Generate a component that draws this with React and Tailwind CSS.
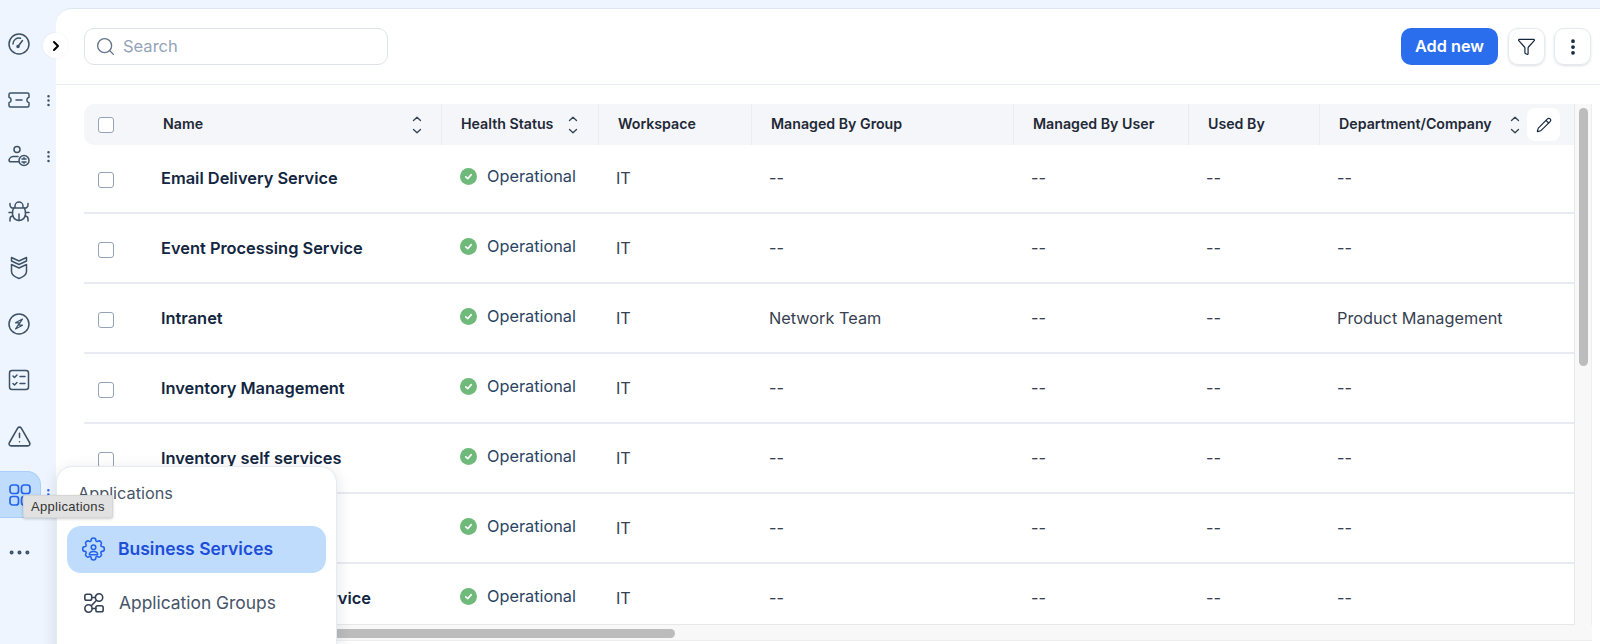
import {
  ChevronRight,
  EllipsisVertical,
  Ellipsis,
  Funnel,
  Pencil,
  Search,
  TriangleAlert,
} from "lucide-react";

const inter = "font-['Inter',sans-serif]";

function Ico({ children, className = "w-[24px] h-[24px]", sw = 1.5 }) {
  return (
    <svg viewBox="0 0 24 24" fill="none" stroke="currentColor" strokeWidth={sw} strokeLinecap="round" strokeLinejoin="round" className={className}>
      {children}
    </svg>
  );
}

const GaugeIcon = () => (
  <Ico>
    <circle cx="12" cy="12" r="10" />
    <path d="M6 12a6 6 0 0 1 7.5-5.800" />
    <path d="M11 14.500l4.500-6" />
    <circle cx="11" cy="14.500" r="1" fill="currentColor" />
  </Ico>
);
const TicketIcon = () => (
  <Ico>
    <path d="M3.500 5h17a1.500 1.500 0 0 1 1.500 1.500v2.700a2.900 2.900 0 0 0 0 5.600v2.700a1.500 1.500 0 0 1-1.500 1.500h-17A1.500 1.500 0 0 1 2 17.500v-2.700a2.900 2.900 0 0 0 0-5.600V6.500A1.500 1.500 0 0 1 3.500 5z" />
    <path d="M9 12h6" />
  </Ico>
);
const UserCostIcon = () => (
  <Ico>
    <circle cx="10" cy="5.500" r="3" />
    <path d="M11 12.500H7a4.500 4.500 0 0 0-5 3.500c0 1.200 1 1.800 2 1.800h8" />
    <circle cx="17" cy="16.500" r="5" />
    <path d="M15 15h4M15 18h4M17 13.800v.6M17 18.600v.6" />
  </Ico>
);
const BugIcon = () => (
  <Ico>
    <path d="M8 7.500V6a4 4 0 0 1 8 0v1.500" />
    <path d="M6.500 8h11c.8 2 1 4 1 6a6.500 6.500 0 0 1-13 0c0-2 .2-4 1-6z" />
    <path d="M12 14v6.500" />
    <path d="M3 3.500v1.500a3 3 0 0 0 3.500 3M21 3.500v1.500a3 3 0 0 1-3.500 3" />
    <path d="M2 12.500h3.500M22 12.500h-3.500" />
    <path d="M3 21v-2a3 3 0 0 1 3-3M21 21v-2a3 3 0 0 0-3-3" />
  </Ico>
);
const ShieldIcon = () => (
  <Ico>
    <path d="M4.500 1.500 12 5l7.500-3.500V5L12 8.500 4.500 5z" />
    <path d="M4.500 8.500 12 12l7.500-3.500v7c0 3-3.500 5.500-7.500 7-4-1.500-7.500-4-7.500-7z" />
  </Ico>
);
const BoltIcon = () => (
  <Ico>
    <circle cx="12" cy="12" r="10" />
    <path d="M15.500 7 8.500 10.800h4L8.500 17l7-3.800h-4z" strokeWidth="1.200" />
  </Ico>
);
const ChecklistIcon = () => (
  <Ico>
    <rect x="2.500" y="2.500" width="19" height="19" rx="2.500" />
    <path d="M6 8l1.500 1.500L10 7M6 15.500 7.500 17 10 14.500" />
    <path d="M13 8.500h5M13 15.500h5" />
  </Ico>
);
const GridIcon = () => (
  <Ico className="w-[24px] h-[24px]" sw={1.7}>
    <rect x="2" y="2" width="8.500" height="8.500" rx="2.500" />
    <rect x="13.500" y="2" width="8.500" height="8.500" rx="2.500" />
    <rect x="2" y="13.500" width="8.500" height="8.500" rx="2.500" />
    <rect x="13.500" y="13.500" width="8.500" height="8.500" rx="2.500" />
  </Ico>
);
const GearUserIcon = () => (
  <Ico className="w-[25px] h-[25px]">
    <path d="M9.700 2.800a2.300 2.300 0 0 1 4.600 0c0 .8 1 1.300 1.700.9a2.300 2.300 0 0 1 3.200 3.200c-.4.700 0 1.700.9 1.800a2.300 2.300 0 0 1 0 4.600c-.9.100-1.300 1.100-.9 1.800a2.300 2.300 0 0 1-3.200 3.200c-.7-.4-1.700 0-1.700.9a2.300 2.300 0 0 1-4.600 0c0-.9-1-1.300-1.700-.9a2.300 2.300 0 0 1-3.200-3.200c.4-.7 0-1.700-.9-1.800a2.300 2.300 0 0 1 0-4.600c.9-.1 1.300-1.100.9-1.800A2.300 2.300 0 0 1 8 3.700c.7.400 1.700-.1 1.700-.9z" transform="translate(0 .5)" />
    <circle cx="12" cy="9.800" r="2.200" />
    <path d="M8 17c0-2 1.800-3 4-3s4 1 4 3z" />
  </Ico>
);
const GroupsIcon = () => (
  <Ico className="w-[22px] h-[22px]" sw={1.7}>
    <rect x="2" y="2.500" width="7.500" height="6.500" rx="2" />
    <circle cx="17.500" cy="6" r="4" />
    <circle cx="6" cy="18" r="4" />
    <rect x="14" y="15" width="8" height="6.500" rx="2" />
    <path d="M9.500 6h4M14.800 9 9 15M10 18h4" />
  </Ico>
);

// up and down arrows with a wider gap than ChevronsUpDown
const SortArrows = () => (
  <svg viewBox="0 0 10 18" fill="none" stroke="currentColor" strokeWidth="1.300" strokeLinecap="round" strokeLinejoin="round" className="w-[10px] h-[18px] text-[#334155]">
    <path d="M1.500 4.500 5 1.200l3.500 3.300" />
    <path d="M1.500 13.500 5 16.800l3.500-3.300" />
  </svg>
);

const OkIcon = () => (
  <span className="w-[17px] h-[17px] rounded-full bg-[#6fb97a] flex items-center justify-center shrink-0">
    <svg viewBox="0 0 12 12" fill="none" stroke="white" strokeWidth="1.800" strokeLinecap="round" strokeLinejoin="round" className="w-[11px] h-[11px]">
      <path d="M3 6.300 5.200 8.300 9 4" />
    </svg>
  </span>
);

const Box = () => <span className="block w-[16px] h-[16px] rounded-[3px] border border-[#94a3b8] bg-white" />;

const nav = [
  { icon: <GaugeIcon /> },
  { icon: <TicketIcon />, more: true },
  { icon: <UserCostIcon />, more: true },
  { icon: <BugIcon /> },
  { icon: <ShieldIcon /> },
  { icon: <BoltIcon /> },
  { icon: <ChecklistIcon /> },
  { icon: <TriangleAlert className="w-[25px] h-[25px]" strokeWidth={1.5} /> },
];

const rows = [
  { name: "Email Delivery Service" },
  { name: "Event Processing Service" },
  { name: "Intranet", group: "Network Team", dept: "Product Management" },
  { name: "Inventory Management" },
  { name: "Inventory self services" },
  { name: "Login Service" },
  { name: "Report Processing Service" },
];

const gridCols = "grid grid-cols-[358px_157px_153px_262px_175px_131px_255px]";

function Head({ label, sort, width }) {
  return (
    <div className="h-full flex items-center border-r border-[#e9ecf1] last:border-r-0 pl-[19px]">
      <span className={`text-[14.200px] font-semibold text-[#1f2937] -mt-[1px] ${width}`}>{label}</span>
      {sort && <SortArrows />}
    </div>
  );
}

function Row({ row }) {
  const cell = "pl-[17px] text-[16.300px] text-[#374151]";
  return (
    <div className={`${gridCols} h-[70px] items-center border-b-2 border-[#e8ecf2]`}>
      <div className="flex items-center">
        <span className="pl-[14px] w-[77px] mt-[5px]"><Box /></span>
        <span className="text-[16.400px] font-semibold text-[#12263f] whitespace-nowrap">{row.name}</span>
      </div>
      <div className="pl-[18px] flex items-center gap-[10px] -mt-[3px]">
        <OkIcon />
        <span className="text-[16.300px] text-[#2b4463]">Operational</span>
      </div>
      <div className={cell}>IT</div>
      <div className={cell}>{row.group || "--"}</div>
      <div className={cell}>--</div>
      <div className={cell}>--</div>
      <div className={cell}>{row.dept || "--"}</div>
    </div>
  );
}

export default function App() {
  return (
    <div className={`${inter} relative flex w-[1600px] h-[644px] overflow-hidden bg-[#eef5fe]`}>
      {/* left rail */}
      <aside className="w-[56px] shrink-0 flex flex-col pt-[16px] text-[#3d5266]">
        {nav.map((item, i) => (
          <div key={i} className="h-[56px] flex items-center">
            <span className="w-[38px] flex justify-center">{item.icon}</span>
            {item.more && <EllipsisVertical className="w-[15px] h-[15px] ml-[3px]" />}
          </div>
        ))}
        <div className="h-[47px] mt-[7px] flex items-center">
          <span className="w-[42px] h-[47px] rounded-r-[14px] bg-[#bfdcfd] border border-l-0 border-[#a8cefb] flex items-center justify-center text-[#2563eb]">
            <GridIcon />
          </span>
          <EllipsisVertical className="w-[15px] h-[15px] text-[#2563eb]" />
        </div>
        <div className="h-[56px] mt-[6px] flex items-center">
          <span className="w-[38px] flex justify-center"><Ellipsis className="w-[27px] h-[27px]" strokeWidth={1.6} /></span>
        </div>
      </aside>

      {/* main panel */}
      <main className="flex-1 mt-[8px] flex flex-col bg-white rounded-tl-[16px] border-t border-[#dde6f0] min-w-0">
        <div className="h-[76px] shrink-0 flex items-center justify-between pl-[28px] pr-[9px] border-b border-[#e8edf3]">
          <div className="w-[304px] h-[37px] rounded-[10px] border border-[#dfe4ea] flex items-center pl-[10px] gap-[7px]">
            <Search className="w-[21px] h-[21px] text-[#64748b]" strokeWidth={1.5} />
            <span className="text-[16.500px] text-[#94a3b8]">Search</span>
          </div>
          <div className="flex items-center">
            <button className="w-[97px] h-[37px] rounded-[10px] bg-[#2a6ded] text-white text-[16.300px] font-semibold">Add new</button>
            <button className="ml-[10px] w-[37px] h-[37px] rounded-[10px] border border-[#e5e9f0] shadow-sm flex items-center justify-center text-[#12263f]">
              <Funnel className="w-[19px] h-[19px]" strokeWidth={1.5} />
            </button>
            <button className="ml-[9px] w-[37px] h-[37px] rounded-[10px] border border-[#e5e9f0] shadow-sm flex items-center justify-center text-[#12263f]">
              <EllipsisVertical className="w-[20px] h-[20px]" strokeWidth={2.5} />
            </button>
          </div>
        </div>

        {/* table with scrollbars */}
        <div className="flex flex-1 min-h-0 pl-[28px] pr-[8px] pt-[19px] pb-[3px]">
          <div className="relative flex-1 min-w-0 flex flex-col overflow-hidden">
            <div className="flex flex-1 min-h-0">
              <div className="relative flex-1 min-w-0 overflow-hidden border-b border-r border-[#e8e8e8]">
                <div className={`${gridCols} relative z-10 h-[41px] items-center bg-[#f4f6f9] rounded-l-[10px]`}>
                  <div className="h-full flex items-center border-r border-[#e9ecf1]">
                    <span className="pl-[14px] w-[79px]"><Box /></span>
                    <span className="text-[14.200px] font-semibold text-[#1f2937] -mt-[1px] w-[249px]">Name</span>
                    <SortArrows />
                  </div>
                  <Head label="Health Status" sort width="w-[107px]" />
                  <Head label="Workspace" />
                  <Head label="Managed By Group" />
                  <Head label="Managed By User" />
                  <Head label="Used By" />
                  <Head label="Department/Company" sort width="w-[171px]" />
                </div>
                <div className="-mt-[1px]">
                  {rows.map((r) => <Row key={r.name} row={r} />)}
                </div>
                <button className="absolute z-20 top-[4px] right-[14px] w-[33px] h-[33px] rounded-[8px] bg-white flex items-center justify-center text-[#12263f]">
                  <Pencil className="w-[16px] h-[16px]" strokeWidth={1.7} />
                </button>
              </div>
              <div className="w-[17px] shrink-0 bg-[#f8f8f8] border-r border-[#eeeeee] pl-[4px] pt-[4px]">
                <div className="w-[9px] h-[258px] rounded-full bg-[#bcbcbc]" />
              </div>
            </div>
            <div className="h-[16px] shrink-0 bg-[#f8f8f8] border-b border-[#eeeeee] pt-[4px]">
              <div className="ml-[200px] w-[391px] h-[9px] rounded-full bg-[#bcbcbc]" />
            </div>
          </div>
        </div>
      </main>

      {/* expand rail */}
      <button className="absolute z-10 left-[43px] top-[33px] w-[25px] h-[25px] rounded-full bg-white shadow-[0_0_3px_rgba(15,23,42,0.06)] flex items-center justify-center text-black">
        <ChevronRight className="w-[16px] h-[16px]" strokeWidth={3} />
      </button>

      {/* flyout menu */}
      <div className="absolute z-20 left-[56px] top-[466px] w-[281px] h-[200px] bg-white rounded-[16px] border border-[#e5eaf0] shadow-[0_4px_16px_rgba(15,23,42,0.12)] px-[10px]">
        <div className="pl-[11px] pt-[14px] h-[59px] text-[16.300px] text-[#475569]">Applications</div>
        <div className="h-[47px] rounded-[14px] bg-[#bfdcfd] flex items-center pl-[14px] gap-[12px] text-[#2563eb]">
          <GearUserIcon />
          <span className="text-[17.500px] font-semibold text-[#1d4ed8]">Business Services</span>
        </div>
        <div className="h-[60px] flex items-center pl-[16px] gap-[14px] text-[#334155]">
          <GroupsIcon />
          <span className="text-[17.400px] text-[#475569]">Application Groups</span>
        </div>
      </div>

      {/* native tooltip */}
      <div className="absolute z-30 left-[23px] top-[495px] w-[90px] h-[23px] px-[7px] bg-[#e1e1e1] border border-[#d6d6d6] shadow-[0_1px_3px_rgba(0,0,0,0.2)] rounded-[2px] flex items-center font-['Liberation_Sans',sans-serif] text-[13px] tracking-[0.3px] text-[#333333]">
        Applications
      </div>
    </div>
  );
}
